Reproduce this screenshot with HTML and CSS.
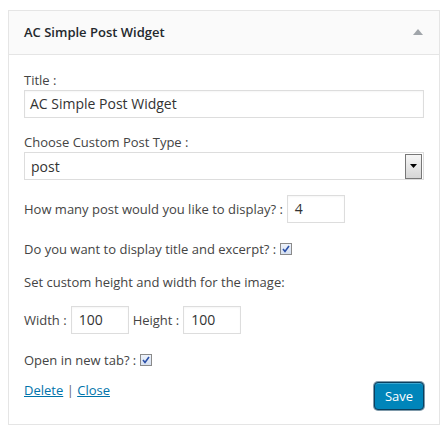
FILE: index.html
```html
<!DOCTYPE html>
<html>
<head>
<meta charset="utf-8">
<link rel="stylesheet" href="styles.css">
</head>
<body>
<div class="widget">
  <div class="widget-top">
    <h3 class="widget-title">AC Simple Post Widget</h3>
    <svg class="toggle" width="10" height="6" viewBox="0 0 10 6"><polygon points="5,0 10,6 0,6" fill="#a0a5aa"/></svg>
  </div>
  <div class="widget-inside">
    <div class="field">
      <div class="label">Title :</div>
      <div class="input wide big">AC Simple Post Widget</div>
    </div>
    <div class="field">
      <div class="label">Choose Custom Post Type :</div>
      <div class="select">
        <span class="select-val">post</span>
        <span class="select-btn"><svg width="7" height="4" viewBox="0 0 7 4"><polygon points="0,0 7,0 3.5,4" fill="#000"/></svg></span>
      </div>
    </div>
    <div class="row r-count">
      <span class="label">How many post would you like to display? :</span>
      <span class="input small">4</span>
    </div>
    <div class="row r-excerpt">
      <span class="label">Do you want to display title and excerpt? :</span>
      <span class="check"><svg width="10" height="10" viewBox="0 0 10 10"><path d="M2 5 L4 7.5 L8 2" stroke="#2a4fa8" stroke-width="1.6" fill="none"/></svg></span>
    </div>
    <div class="row r-set">
      <span class="label">Set custom height and width for the image:</span>
    </div>
    <div class="row r-size">
      <span class="label">Width :</span>
      <span class="input small">100</span>
      <span class="label lh">Height :</span>
      <span class="input small">100</span>
    </div>
    <div class="row r-tab">
      <span class="label">Open in new tab? :</span>
      <span class="check"><svg width="10" height="10" viewBox="0 0 10 10"><path d="M2 5 L4 7.5 L8 2" stroke="#2a4fa8" stroke-width="1.6" fill="none"/></svg></span>
    </div>
    <div class="footer">
      <div class="links"><a href="#">Delete</a> <span class="sep">|</span> <a href="#">Close</a></div>
      <button class="save">Save</button>
    </div>
  </div>
</div>
</body>
</html>
```

FILE: styles.css
```css
* { box-sizing: border-box; }
body {
  margin: 0;
  background: #fff;
  font-family: "Open Sans", "Noto Sans", sans-serif;
  font-size: 13px;
  color: #444;
}
.widget {
  margin: 10px 0 0 8px;
  width: 432px;
  border: 1px solid #e5e5e5;
  background: #fff;
}
.widget-top {
  height: 44px;
  background: #fafafa;
  border-bottom: 1px solid #e5e5e5;
  display: flex;
  align-items: center;
  justify-content: space-between;
  padding: 0 16px 2px 15px;
}
.widget-title {
  margin: 0;
  font-size: 13px;
  font-weight: 600;
  color: #23282d;
}
.toggle { margin-top: 0; }
.widget-inside {
  padding: 16px 15px 14px 15px;
}
.label { color: #444; line-height: 18px; }
.field { margin-bottom: 15px; }
.field .label { margin-bottom: 1px; }
.input {
  display: block;
  border: 1px solid #ddd;
  background: #fff;
  color: #333;
  height: 28px;
  line-height: 26px;
  padding: 0 5px;
  box-shadow: inset 0 1px 2px rgba(0,0,0,0.04);
}
.input.wide { width: 400px; }
.input.big { font-size: 14px; }
.input.small {
  display: inline-block;
  width: 58px;
  font-size: 14px;
  padding: 0 7px;
}
.select {
  display: flex;
  align-items: center;
  width: 400px;
  height: 28px;
  border: 1px solid #ddd;
  padding: 0 1px 0 6px;
  font-size: 14px;
  color: #333;
}
.select-val { flex: 1; }
.select-btn {
  width: 17px;
  height: 25px;
  border: 1px solid #777;
  background: linear-gradient(#f6f6f6, #d6d6d6);
  display: flex;
  align-items: center;
  justify-content: center;
}
.row {
  display: flex;
  align-items: center;
  gap: 4px;
}
.r-count { margin-top: 14px; }
.r-excerpt { margin-top: 17px; }
.r-set { margin-top: 15px; }
.r-size { margin-top: 15px; }
.r-size .lh { margin-left: 0; }
.r-tab { margin-top: 17px; }
.check {
  width: 12px;
  height: 12px;
  border: 1px solid #8a8a8a;
  background: linear-gradient(#eef3fb, #d6e0f0);
  display: inline-flex;
  align-items: center;
  justify-content: center;
}
.check svg { display: block; }
.footer {
  margin-top: 12px;
  display: flex;
  justify-content: space-between;
  align-items: flex-start;
}
.links { line-height: 18px; }
.links a { color: #0073aa; text-decoration: underline; }
.sep { color: #666; }
.save {
  margin-top: 1px;
  width: 50px;
  height: 28px;
  border: 1px solid #0b3f5e;
  border-radius: 4px;
  background: #0085ba;
  color: #fff;
  font-family: "Open Sans", "Noto Sans", sans-serif;
  font-size: 13px;
  box-shadow: 0 0 0 1px rgba(20,70,100,0.55), inset 0 1px 0 rgba(120,200,230,0.5);
  padding: 0;
}
```
